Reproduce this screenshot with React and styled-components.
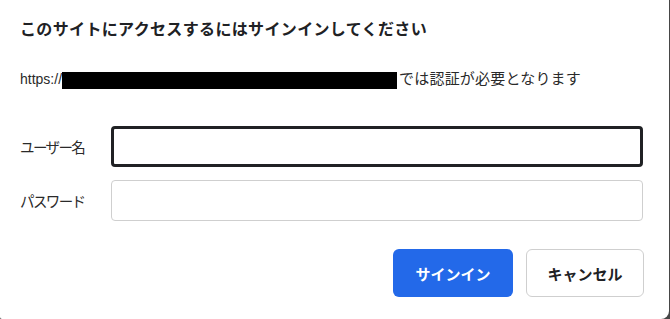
import styled, { createGlobalStyle } from 'styled-components';

const GlobalStyle = createGlobalStyle`
  html, body {
    margin: 0;
    padding: 0;
    background: #464646;
    overflow: hidden;
  }
  * {
    box-sizing: border-box;
  }
`;

const Dialog = styled.div`
  width: 669px;
  height: 319px;
  background: #ffffff;
  border-radius: 0 0 8px 2px;
  padding: 18px 26px 0 20px;
  font-family: 'Liberation Sans', 'Noto Sans CJK JP', sans-serif;
  color: #202124;
  display: flex;
  flex-direction: column;
`;

const Title = styled.h1`
  margin: 0;
  font-family: 'Noto Sans CJK JP', sans-serif;
  font-size: 16px;
  line-height: 20px;
  font-weight: 700;
  letter-spacing: 0.35px;
`;

const Message = styled.p`
  margin: 31px 0 0;
  font-size: 15px;
  line-height: 20px;
  color: #2a2a2a;
  display: flex;
  align-items: center;
  letter-spacing: 0.2px;
`;

const Scheme = styled.span`
  font-size: 14px;
  letter-spacing: 0;
`;

const Redacted = styled.span`
  display: inline-block;
  width: 335px;
  height: 17px;
  background: #000000;
  margin: 2px 2px 0 0;
`;

const Form = styled.div`
  margin-top: 37px;
  display: grid;
  grid-template-columns: 91px 1fr;
  row-gap: 13px;
  align-items: center;
`;

const Label = styled.label`
  font-family: 'Noto Sans CJK JP', sans-serif;
  font-size: 14.5px;
  letter-spacing: -1.6px;
  color: #2a2a2a;
`;

const Input = styled.input`
  height: 41px;
  width: 100%;
  border: ${({ $focused }) => ($focused ? '3px solid #202124' : '1px solid #cfcfcf')};
  border-radius: 4px;
  outline: none;
  font-size: 14px;
  padding: 0 10px;
  background: #ffffff;
`;

const Actions = styled.div`
  margin-top: 28px;
  display: flex;
  justify-content: flex-end;
  gap: 13px;
  margin-right: -1px;
`;

const Button = styled.button`
  height: 48px;
  border-radius: 6px;
  font-family: 'Noto Sans CJK JP', sans-serif;
  font-size: 15px;
  font-weight: 700;
  cursor: pointer;
  width: ${({ $wide }) => $wide || '118px'};
  background: ${({ $primary }) => ($primary ? '#2369e9' : '#ffffff')};
  color: ${({ $primary }) => ($primary ? '#ffffff' : '#202124')};
  border: ${({ $primary }) => ($primary ? 'none' : '1px solid #cfcfcf')};
`;

export default function App() {
  return (
    <>
      <GlobalStyle />
      <Dialog>
        <Title>このサイトにアクセスするにはサインインしてください</Title>
        <Message>
          <Scheme>https://</Scheme>
          <Redacted />では認証が必要となります
        </Message>
        <Form>
          <Label htmlFor="user">ユーザー名</Label>
          <Input id="user" $focused />
          <Label htmlFor="pass">パスワード</Label>
          <Input id="pass" type="password" />
        </Form>
        <Actions>
          <Button $primary $wide="120px">サインイン</Button>
          <Button>キャンセル</Button>
        </Actions>
      </Dialog>
    </>
  );
}
